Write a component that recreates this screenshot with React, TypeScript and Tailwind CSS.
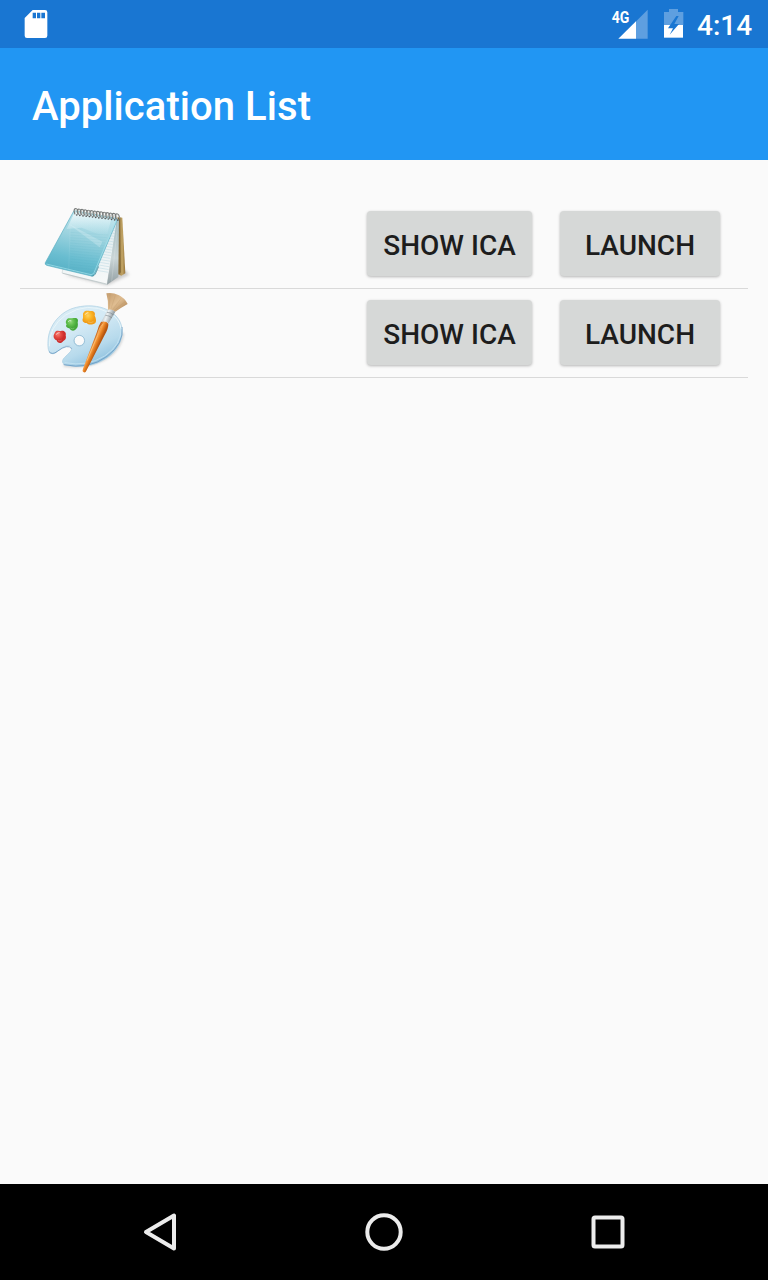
import type { ReactNode } from "react";

function StatusBar() {
  return (
    <div className="flex h-12 shrink-0 justify-between bg-[#1976d2] text-white">
      <svg width="80" height="48" viewBox="0 0 240 144" aria-hidden="true">
        <path
          fill="#fff"
          fillRule="evenodd"
          d="M98 30h37q7 0 7 7v70q0 7-7 7H81q-7 0-7-7V54zM98 38v17h10V38zM111 38v17h10V38zM124 38v17h11V38z"
        />
      </svg>
      <div className="flex">
        <svg width="97" height="48" viewBox="0 0 291 144" aria-hidden="true">
          <text transform="translate(35 67.5) scale(.86 1)" fill="#fff" fontFamily="Roboto, sans-serif" fontWeight="700" fontSize="49">4G</text>
          <path fill="#5e9fe0" d="M143 29v87h-36V65z" />
          <path fill="#fff" d="M108 64v52H55z" />
          <path fill="#5e9fe0" d="M207 27h27v9h16v40h-58V36h15z" />
          <path fill="#fff" d="M192 75h57v38h-57z" />
          <path fill="#1976d2" d="M229 48l-25 37h15l-10 19 28-32h-14l13-24z" />
        </svg>
        <span className="mt-[10px] w-[71px] text-[28px] leading-8 font-medium">4:14</span>
      </div>
    </div>
  );
}

const coils = Array.from({ length: 14 }, (_, i) => ({ x: 139 + i * 9.5, y: 49 + i * 1.2 }));

function NotepadIcon() {
  return (
    <svg width="110" height="88" viewBox="0 15 330 264" role="img" aria-label="Notepad">
      <defs>
        <linearGradient id="cover" x1=".65" y1="0" x2=".4" y2="1">
          <stop offset="0" stopColor="#c3e6ee" />
          <stop offset=".4" stopColor="#9cd3df" />
          <stop offset=".75" stopColor="#69bdd0" />
          <stop offset="1" stopColor="#55afc4" />
        </linearGradient>
        <linearGradient id="glare" x1=".35" y1="0" x2=".5" y2="1">
          <stop offset="0" stopColor="#fff" stopOpacity=".75" />
          <stop offset="1" stopColor="#d9f3f8" stopOpacity="0" />
        </linearGradient>
        <linearGradient id="pages" x1="0" y1="0" x2="0" y2="1">
          <stop offset="0" stopColor="#dce9ed" />
          <stop offset="1" stopColor="#f7f9f9" />
        </linearGradient>
        <linearGradient id="side" x1="0" y1="0" x2="0" y2="1">
          <stop offset="0" stopColor="#9db8bd" />
          <stop offset=".6" stopColor="#cad5d7" />
          <stop offset="1" stopColor="#929fa3" />
        </linearGradient>
        <linearGradient id="back" x1="0" y1="0" x2="1" y2="0">
          <stop offset="0" stopColor="#80622c" />
          <stop offset=".65" stopColor="#c2a566" />
          <stop offset="1" stopColor="#98753a" />
        </linearGradient>
        <filter id="soft" x="-20%" y="-60%" width="140%" height="220%">
          <feGaussianBlur stdDeviation="4" />
        </filter>
      </defs>
      <path d="M105 240l127 31 66-32-16-16z" fill="#777" opacity=".35" filter="url(#soft)" />
      <path d="M263 65l14 3 9 167-12 7-15-7z" fill="url(#back)" />
      <path d="M263 68h7l3 164-8 7z" fill="#71582c" opacity=".6" />
      <path d="M137 61l127 14-33 194-135-35z" fill="url(#pages)" stroke="#bccacc" strokeWidth="1.5" />
      <path d="M261 70l6 5-2 171-34 23z" fill="url(#side)" />
      <path d="M264 78l-19 182" stroke="#eff3f3" strokeWidth="1.4" opacity=".45" />
      <g stroke="#a9d0db" strokeWidth="1.2">
        {Array.from({ length: 17 }, (_, i) => (
          <path key={i} d={`M${236 - i * 3} ${96 + i * 8}L${257 - i * 1.4} ${99 + i * 8.3}`} />
        ))}
      </g>
      <path d="M98 235l132 32" stroke="#a7b0b2" strokeWidth="1.5" />
      <path d="M132 47l126 23q4 3 2 9l-66 157q-3 7-10 7L50 211q-6-2-4-8z" fill="url(#cover)" stroke="#57adc1" strokeWidth="2" />
      <path d="M134 52l110 20-15 55-74-29-45 4z" fill="url(#glare)" />
      <path d="M112 84l97 73 8-17z" fill="#e6f6f9" opacity=".3" />
      <g stroke="#2e94ae" strokeWidth="1" opacity=".18">
        {Array.from({ length: 15 }, (_, i) => (
          <path key={i} d={`M121 ${112 + i * 8}L${235 - i * 3.2} ${120 + i * 8}`} />
        ))}
      </g>
      <path d="M121 91l-5 134" stroke="#fff" strokeWidth="1" opacity=".2" />
      <path d="M258 77l-66 156q-3 6-9 6L49 207" fill="none" stroke="#a4e2ed" strokeWidth="2" />
      <path d="M185 244q8-1 11-7l10-23" fill="none" stroke="#26798d" strokeWidth="2" />
      {coils.map(({ x, y }) => (
        <g key={x} fill="none">
          <path d={`M${x - 4} ${y + 9}q-6-17 2-17q7 0 9 17`} stroke="#777a79" strokeWidth="3.6" />
          <path d={`M${x - 2} ${y + 6}q-3-12 1-12q4 1 6 11`} stroke="#d5d6d2" strokeWidth="1.8" />
          <circle cx={x + 1} cy={y + 11} r="2.5" fill="#55585a" />
        </g>
      ))}
    </svg>
  );
}

function PaletteIcon() {
  return (
    <svg width="110" height="88" viewBox="0 12 330 264" role="img" aria-label="Paint">
      <defs>
        <linearGradient id="board" x1=".2" y1="0" x2=".75" y2="1">
          <stop offset="0" stopColor="#d9ecf5" />
          <stop offset=".35" stopColor="#d5eaf5" />
          <stop offset=".7" stopColor="#b7daec" />
          <stop offset="1" stopColor="#84badb" />
        </linearGradient>
        <linearGradient id="wood" gradientUnits="userSpaceOnUse" x1="187" y1="170" x2="207" y2="179">
          <stop offset="0" stopColor="#c15c13" />
          <stop offset=".35" stopColor="#f9a248" />
          <stop offset=".65" stopColor="#e27b1c" />
          <stop offset="1" stopColor="#b65610" />
        </linearGradient>
        <linearGradient id="ferrule" x1="0" y1="0" x2="1" y2=".4">
          <stop offset="0" stopColor="#7f8b91" />
          <stop offset=".5" stopColor="#edf1f2" />
          <stop offset="1" stopColor="#75828a" />
        </linearGradient>
        <linearGradient id="bristle" x1="0" y1="0" x2="1" y2="1">
          <stop offset="0" stopColor="#c49c6e" />
          <stop offset=".5" stopColor="#dfbd91" />
          <stop offset="1" stopColor="#a77b4a" />
        </linearGradient>
        <radialGradient id="red" cx=".35" cy=".3"><stop stopColor="#f77d70" /><stop offset=".55" stopColor="#e34840" /><stop offset="1" stopColor="#cd2d2b" /></radialGradient>
        <radialGradient id="green" cx=".4" cy=".3"><stop stopColor="#90d878" /><stop offset=".55" stopColor="#5fbe4c" /><stop offset="1" stopColor="#45a839" /></radialGradient>
        <radialGradient id="yellow" cx=".4" cy=".35"><stop stopColor="#ffd35c" /><stop offset=".55" stopColor="#fbb526" /><stop offset="1" stopColor="#f09c18" /></radialGradient>
        <filter id="haze" x="-10%" y="-10%" width="120%" height="130%"><feGaussianBlur stdDeviation="3" /></filter>
      </defs>
      <path d="M101 242q65 9 118-17 53-28 60-81" fill="none" stroke="#666" strokeWidth="7" opacity=".25" filter="url(#haze)" />
      <path
        d="M54 168C56 121 91 78 139 67C207 51 269 79 276 130C283 187 230 235 167 243Q137 247 109 241Q95 237 98 226C101 215 126 202 125 190C123 178 106 181 94 190C81 199 77 207 66 206C54 204 53 187 54 168ZM148 151a15 15 0 1 0 0 31a15 15 0 1 0 0-31Z"
        fill="url(#board)"
        fillRule="evenodd"
        stroke="#a9cde1"
        strokeWidth="2"
      />
      <path d="M57 200q10 11 25-1 32-24 43-8M101 239q75 16 130-25 52-39 45-88" fill="none" stroke="#6b9bc3" strokeWidth="2.5" />
      <path d="M58 184q-2-58 49-94 67-42 130-7 32 17 36 48" fill="none" stroke="#e9f6fa" strokeWidth="3" />
      <path d="M104 233q68 13 120-20 51-35 49-83" fill="none" stroke="#cbe7f5" strokeWidth="2" />
      <circle cx="148" cy="167" r="16" fill="none" stroke="#8fb9d2" strokeWidth="2" />
      <path d="M73 146C77 133 87 138 93 138C103 135 110 144 107 151C111 165 101 167 98 170C93 176 82 175 80 166C72 163 68 154 73 146Z" fill="url(#red)" />
      <path d="M110 104C114 97 123 102 130 99C143 97 146 104 143 112C145 121 143 130 138 132C133 140 122 138 118 130C107 128 107 122 110 118C106 113 107 108 110 104Z" fill="url(#green)" />
      <path d="M159 86C163 75 172 77 180 78C192 77 197 83 194 92C200 103 200 114 191 117C181 120 175 119 170 114C160 115 155 107 159 99Z" fill="url(#yellow)" />
      <g fill="none" stroke="#fff" strokeLinecap="round" strokeWidth="3" opacity=".65">
        <path d="M79 148q2-6 9-5M115 109q3-4 8-2M166 88q3-6 8-5" />
      </g>
      <path d="M84 166q7 4 11-1M121 129q6 5 12 0M174 111q10 4 16-1" fill="none" stroke="#fff" strokeWidth="2" opacity=".35" />
      <path d="M213 111q12-6 22 5 1 13-11 34l-55 107q-3 8-9 4-4-3-1-10l42-111q4-17 12-29z" fill="url(#wood)" />
      <path d="M219 118q-10 5-17 34l-31 75" fill="none" stroke="#ffd28e" strokeWidth="2.5" opacity=".65" />
      <path d="M234 73q12-3 22 7l-20 35q-10-9-22-5z" fill="url(#ferrule)" />
      <path d="M231 82q11 0 20 8M226 91q12 0 20 8" fill="none" stroke="#68747b" strokeWidth="1.5" />
      <path d="M229 25Q247 21 267 31Q285 40 293 57Q275 67 256 80Q245 71 234 74Q236 48 229 25Z" fill="url(#bristle)" />
      <path d="M238 70l2-43M243 71l13-40M249 73l25-34M253 76l32-26" stroke="#af8452" strokeWidth="1.5" opacity=".35" />
    </svg>
  );
}

function ActionButton({ children, className }: { children: ReactNode; className: string }) {
  return (
    <button
      type="button"
      className={`${className} h-[65px] rounded-[4px] bg-[#d6d8d7] pt-[4px] text-[28px] leading-8 font-medium whitespace-nowrap text-[#1d1d1d] shadow-[0_1px_3px_rgba(0,0,0,0.28)]`}
    >
      {children}
    </button>
  );
}

function AppRow({ icon }: { icon: ReactNode }) {
  return (
    <li className="flex h-[89px] justify-between border-b border-[#d9d9d9] pr-[28px] pl-[10px]">
      {icon}
      <div className="flex items-start gap-[28px] pt-[11px]">
        <ActionButton className="w-[165px]">SHOW ICA</ActionButton>
        <ActionButton className="w-[160px]">LAUNCH</ActionButton>
      </div>
    </li>
  );
}

function NavigationBar() {
  return (
    <nav className="flex h-24 shrink-0 items-center justify-between bg-black px-[120px] text-[#ececec]">
      <button type="button" aria-label="Back">
        <svg width="80" height="64" viewBox="0 0 80 64" fill="none" stroke="currentColor" strokeWidth="4" strokeLinejoin="round">
          <path d="M54 15.5v33L26 32z" />
        </svg>
      </button>
      <button type="button" aria-label="Home">
        <svg width="80" height="64" viewBox="0 0 80 64" fill="none" stroke="currentColor" strokeWidth="4">
          <circle cx="40" cy="32" r="16.7" />
        </svg>
      </button>
      <button type="button" aria-label="Recent apps">
        <svg width="80" height="64" viewBox="0 0 80 64" fill="none" stroke="currentColor" strokeWidth="4">
          <rect x="25.5" y="17.5" width="29" height="29" rx="1.5" />
        </svg>
      </button>
    </nav>
  );
}

export default function App() {
  return (
    <div className="flex h-[1280px] w-[768px] flex-col overflow-hidden bg-[#fafafa] font-[Roboto,sans-serif]">
      <StatusBar />
      <header className="flex h-28 shrink-0 items-center bg-[#2196f3] px-8 pt-1.5 text-white">
        <h1 className="text-[40px] leading-[48px] font-medium tracking-[0.06px]">Application List</h1>
      </header>
      <main className="flex-1 px-5 pt-10">
        <ul>
          <AppRow icon={<NotepadIcon />} />
          <AppRow icon={<PaletteIcon />} />
        </ul>
      </main>
      <NavigationBar />
    </div>
  );
}
